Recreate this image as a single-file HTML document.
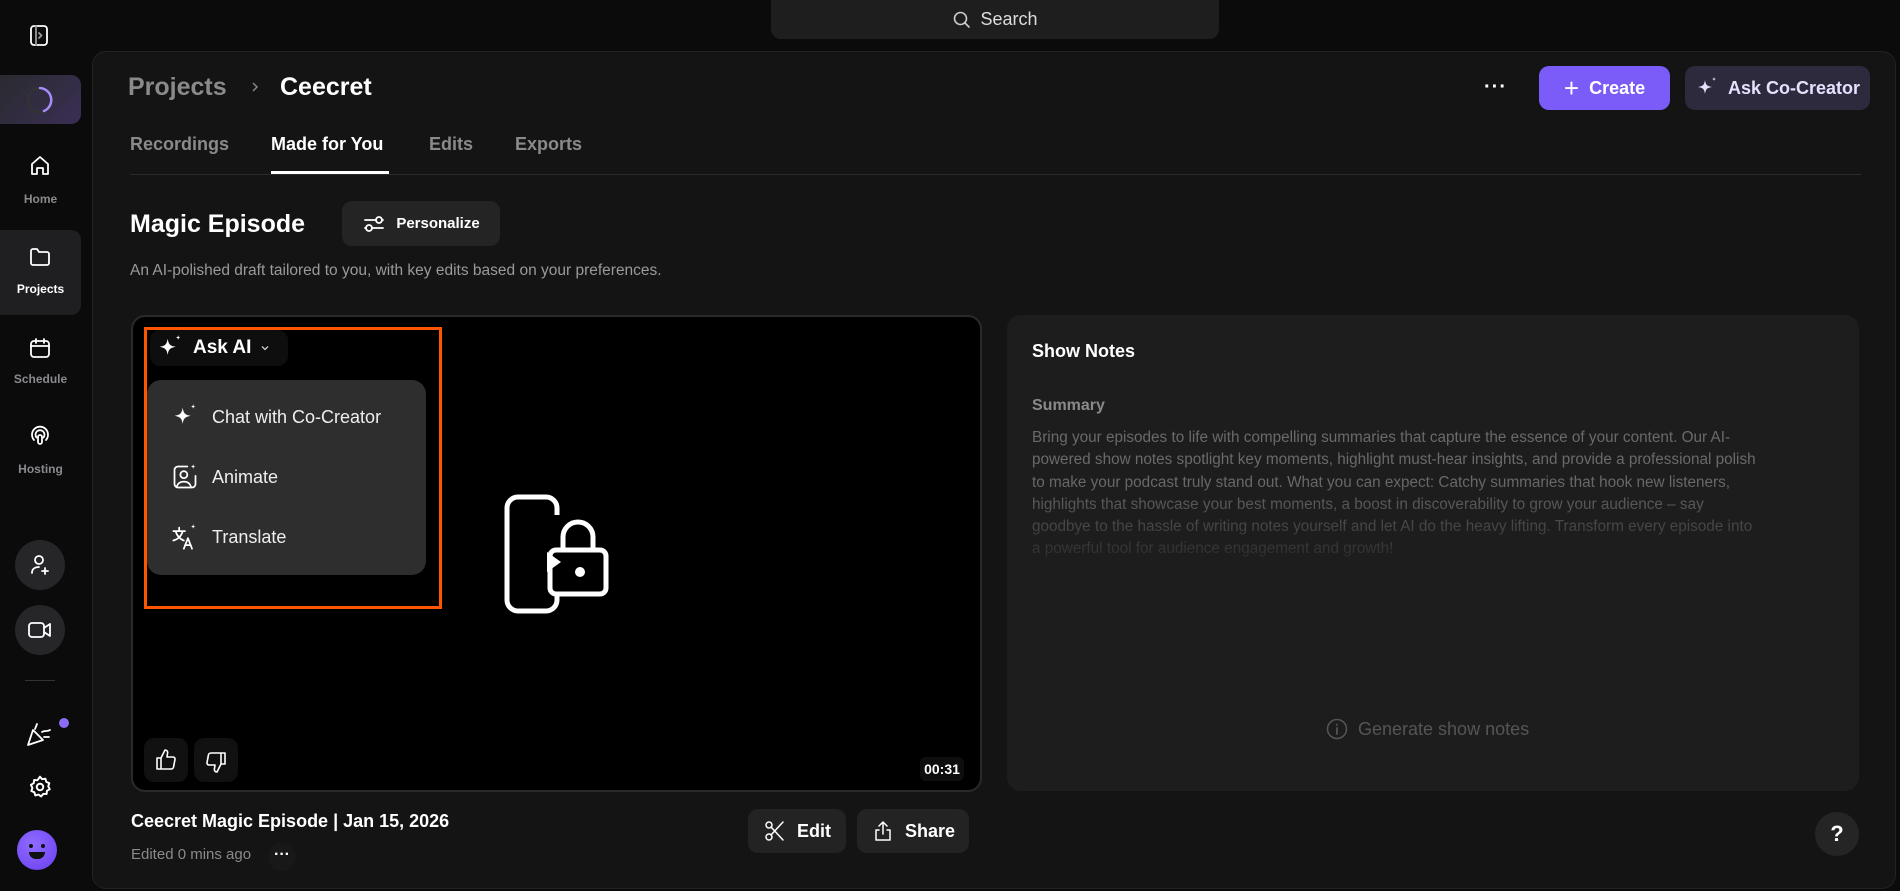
<!DOCTYPE html>
<html><head><meta charset="utf-8"><style>
*{margin:0;padding:0;box-sizing:border-box}
body{width:1900px;height:891px;background:#0b0b0c;font-family:"Liberation Sans",sans-serif;color:#fff;position:relative;overflow:hidden}
.a{position:absolute}
svg{display:block}
.lbl{position:absolute;left:0;width:81px;text-align:center;font-size:12px;font-weight:bold;color:#8a8a8e}
.ic{stroke:#fff;fill:none;stroke-width:1.8;stroke-linecap:round;stroke-linejoin:round}
.btn{position:absolute;border-radius:10px;display:flex;align-items:center;justify-content:center;font-weight:bold}
.mi{position:absolute;left:171px;display:flex;align-items:center;font-size:18px;color:#eee}
.mi svg{margin-right:13px}
</style></head><body>
<!-- search -->
<div class="a" style="left:771px;top:0;width:448px;height:39px;background:#1e1e1f;border-radius:0 0 10px 10px;display:flex;align-items:center;justify-content:center;font-size:18px;color:#ddd">
<svg width="20" height="20" viewBox="0 0 20 20" style="margin-right:8px"><circle cx="8.5" cy="8.5" r="6" stroke="#ccc" stroke-width="1.6" fill="none"/><path d="M13 13l4 4" stroke="#ccc" stroke-width="1.6" stroke-linecap="round"/></svg>Search</div>
<!-- sidebar -->
<svg class="a" style="left:28px;top:23px" width="24" height="24" viewBox="0 0 24 24"><rect x="3" y="3" width="16" height="19" rx="3" class="ic" stroke="#999"/><path d="M8 3v19M11 10l2.5 2.5L11 15" class="ic" style="stroke:#999"/></svg>
<div class="a" style="left:0;top:75px;width:81px;height:49px;border-radius:0 10px 10px 0;background:linear-gradient(135deg,#2a2a2e,#3a2f55)"></div>
<svg class="a" style="left:25px;top:85px" width="30" height="30" viewBox="0 0 30 30"><circle cx="15" cy="15" r="12" stroke="#333" stroke-width="2.5" fill="none"/><path d="M15 3a12 12 0 0 1 4 23" stroke="#a78bfa" stroke-width="2.5" fill="none" stroke-linecap="round"/></svg>
<svg class="a" style="left:28px;top:154px" width="24" height="24" viewBox="0 0 24 24"><path d="M4 10l8-7 8 7v10h-5v-6h-6v6H4z" class="ic"/></svg>
<div class="lbl" style="top:192px">Home</div>
<div class="a" style="left:0;top:230px;width:81px;height:85px;border-radius:0 10px 10px 0;background:#1f1f21"></div>
<svg class="a" style="left:28px;top:245px" width="24" height="24" viewBox="0 0 24 24"><path d="M3 6a2 2 0 0 1 2-2h4l2 3h8a2 2 0 0 1 2 2v9a2 2 0 0 1-2 2H5a2 2 0 0 1-2-2z" class="ic"/></svg>
<div class="lbl" style="top:282px;color:#fff">Projects</div>
<svg class="a" style="left:28px;top:336px" width="24" height="24" viewBox="0 0 24 24"><rect x="3" y="5" width="18" height="16" rx="3" class="ic"/><path d="M3 10h18M8 3v4M16 3v4" class="ic"/></svg>
<div class="lbl" style="top:372px">Schedule</div>
<svg class="a" style="left:28px;top:424px" width="24" height="24" viewBox="0 0 24 24"><path d="M6 16a8 8 0 1 1 12 0M8.5 13.5a4.5 4.5 0 1 1 7 0" class="ic"/><rect x="10" y="11" width="4" height="9" rx="2" class="ic"/></svg>
<div class="lbl" style="top:462px">Hosting</div>
<div class="a" style="left:15px;top:540px;width:50px;height:50px;border-radius:25px;background:#262628"></div>
<svg class="a" style="left:28px;top:553px" width="24" height="24" viewBox="0 0 24 24"><circle cx="11" cy="7" r="4" class="ic"/><path d="M4 20c0-4 3-6 7-6M17 15v6M14 18h6" class="ic"/></svg>
<div class="a" style="left:15px;top:605px;width:50px;height:50px;border-radius:25px;background:#262628"></div>
<svg class="a" style="left:27px;top:618px" width="26" height="24" viewBox="0 0 26 24"><rect x="2" y="5" width="15" height="14" rx="3" class="ic"/><path d="M17 10l6-4v12l-6-4" class="ic"/></svg>
<div class="a" style="left:25px;top:680px;width:30px;height:1px;background:#333"></div>
<svg class="a" style="left:25px;top:720px" width="30" height="28" viewBox="0 0 30 28"><path d="M3 25l5-15 10 10z M10 9l2-5M17 12c3-2 5 0 8-2M19 17h5" class="ic"/></svg>
<div class="a" style="left:59px;top:718px;width:10px;height:10px;border-radius:5px;background:#8b6cf6"></div>
<svg class="a" style="left:27px;top:774px" width="26" height="26" viewBox="0 0 24 24"><path d="M12 2.5l2 2.3 3-.4.8 2.9 2.8 1.2-1 2.9 1.4 2.6-2.6 1.5-.3 3-3-.2L13 20.7 10.6 19l-2.9.8-.9-2.9-2.8-1.2 1-2.8L3.6 10l2.6-1.5.4-3 3 .3z" class="ic"/><circle cx="12" cy="12" r="3" class="ic"/></svg>
<div class="a" style="left:17px;top:830px;width:40px;height:40px;border-radius:20px;background:radial-gradient(circle at 40% 35%,#8f6cff,#6a3df2)"></div>
<div class="a" style="left:29px;top:844px;width:4px;height:4px;border-radius:2px;background:#111"></div>
<div class="a" style="left:41px;top:844px;width:4px;height:4px;border-radius:2px;background:#111"></div>
<div class="a" style="left:29px;top:852px;width:16px;height:7px;border-radius:0 0 8px 8px;background:#111"></div>
<!-- main -->
<div class="a" style="left:92px;top:51px;width:1804px;height:838px;background:#141414;border:1px solid #222;border-radius:14px"></div>
<div class="a" style="left:128px;top:73px;font-size:25px;font-weight:bold;color:#8a8a8a">Projects</div>
<svg class="a" style="left:248px;top:80px" width="14" height="14" viewBox="0 0 14 14"><path d="M5 3l4 4-4 4" stroke="#888" stroke-width="1.5" fill="none"/></svg>
<div class="a" style="left:280px;top:73px;font-size:25px;font-weight:bold">Ceecret</div>
<div class="a" style="left:1484px;top:76px;font-size:20px;font-weight:bold;letter-spacing:1px">···</div>
<div class="btn" style="left:1539px;top:66px;width:131px;height:44px;background:#7b5cf9;font-size:18px"><span style="font-size:26px;font-weight:normal;margin-right:10px;line-height:1">+</span>Create</div>
<div class="btn" style="left:1685px;top:66px;width:185px;height:44px;background:#2e2a3e;font-size:18px;color:#e6e0ff"><svg width="24" height="24" viewBox="0 0 24 24" style="margin-right:9px"><path d="M10 4c.8 5 2 6.2 7 7-5 .8-6.2 2-7 7-.8-5-2-6.2-7-7 5-.8 6.2-2 7-7zM19 1c.3 1.5.6 1.8 2 2-1.4.3-1.7.6-2 2-.3-1.4-.6-1.7-2-2 1.4-.2 1.7-.5 2-2z" fill="#e6e0ff"/></svg>Ask Co-Creator</div>
<div class="a" style="left:130px;top:134px;font-size:18px;color:#8a8a8a;font-weight:bold">Recordings</div>
<div class="a" style="left:271px;top:134px;font-size:18px;color:#fff;font-weight:bold">Made for You</div>
<div class="a" style="left:429px;top:134px;font-size:18px;color:#8a8a8a;font-weight:bold">Edits</div>
<div class="a" style="left:515px;top:134px;font-size:18px;color:#8a8a8a;font-weight:bold">Exports</div>
<div class="a" style="left:130px;top:174px;width:1731px;height:1px;background:#2a2a2a"></div>
<div class="a" style="left:271px;top:171px;width:118px;height:3px;background:#fff"></div>
<div class="a" style="left:130px;top:210px;font-size:25px;font-weight:bold">Magic Episode</div>
<div class="btn" style="left:342px;top:201px;width:158px;height:45px;background:#242424;font-size:15px"><svg width="24" height="22" viewBox="0 0 24 22" style="margin-right:10px"><path d="M3 7h11M20 7h1M3 15h1M10 15h11" class="ic"/><circle cx="17" cy="7" r="3" class="ic"/><circle cx="7" cy="15" r="3" class="ic"/></svg>Personalize</div>
<div class="a" style="left:130px;top:262px;font-size:15.5px;color:#9a9a9a">An AI-polished draft tailored to you, with key edits based on your preferences.</div>
<!-- video -->
<div class="a" style="left:131px;top:315px;width:851px;height:477px;background:#000;border:2px solid #2a2a2a;border-radius:14px"></div>
<div class="a" style="left:150px;top:330px;width:138px;height:36px;background:#0e0e0e;border-radius:10px"></div>
<svg class="a" style="left:156px;top:334px" width="28" height="28" viewBox="0 0 24 24"><path d="M10 4c.8 5 2 6.2 7 7-5 .8-6.2 2-7 7-.8-5-2-6.2-7-7 5-.8 6.2-2 7-7zM19 1c.3 1.5.6 1.8 2 2-1.4.3-1.7.6-2 2-.3-1.4-.6-1.7-2-2 1.4-.2 1.7-.5 2-2z" fill="#fff"/></svg>
<div class="a" style="left:193px;top:337px;font-size:19px;font-weight:bold">Ask AI</div>
<svg class="a" style="left:259px;top:342px" width="12" height="12" viewBox="0 0 12 12"><path d="M3 4.5l3 3 3-3" stroke="#ccc" stroke-width="1.3" fill="none"/></svg>
<div class="a" style="left:147px;top:380px;width:279px;height:195px;background:#2e2e2e;border-radius:14px"></div>
<div class="mi" style="top:403px"><svg width="28" height="28" viewBox="0 0 24 24"><path d="M10 4c.8 5 2 6.2 7 7-5 .8-6.2 2-7 7-.8-5-2-6.2-7-7 5-.8 6.2-2 7-7zM19 1c.3 1.5.6 1.8 2 2-1.4.3-1.7.6-2 2-.3-1.4-.6-1.7-2-2 1.4-.2 1.7-.5 2-2z" fill="#fff"/></svg>Chat with Co-Creator</div>
<div class="mi" style="top:463px"><svg width="28" height="28" viewBox="0 0 24 24"><path d="M14 3H6a3 3 0 0 0-3 3v12a3 3 0 0 0 3 3h12a3 3 0 0 0 3-3v-7" class="ic" style="stroke-width:1.5"/><circle cx="11" cy="10" r="3" class="ic" style="stroke-width:1.5"/><path d="M5 20c1-3 3-4 6-4s5 1 6 4" class="ic" style="stroke-width:1.5"/><path d="M19 1c.3 1.5.6 1.8 2 2-1.4.3-1.7.6-2 2-.3-1.4-.6-1.7-2-2 1.4-.2 1.7-.5 2-2z" fill="#fff"/></svg>Animate</div>
<div class="mi" style="top:523px"><svg width="28" height="28" viewBox="0 0 24 24"><path d="M2 7h10M7 4v3M4 7c1 4 4 7 7 8M10 7c-1 4-4 7-8 8M11 22l3.5-9 3.5 9M12 19h5" class="ic" style="stroke-width:1.5"/><path d="M19 1c.3 1.5.6 1.8 2 2-1.4.3-1.7.6-2 2-.3-1.4-.6-1.7-2-2 1.4-.2 1.7-.5 2-2z" fill="#fff"/></svg>Translate</div>
<div class="a" style="left:144px;top:327px;width:298px;height:282px;border:3px solid #ff5500"></div>
<svg class="a" style="left:500px;top:490px" width="114" height="130" viewBox="0 0 114 130"><path d="M57 25V18a11 11 0 0 0-11-11H18A11 11 0 0 0 7 18v92a11 11 0 0 0 11 11h28a11 11 0 0 0 11-11v-6" stroke="#fff" stroke-width="5" fill="none"/><rect x="50" y="60" width="56" height="44" rx="6" stroke="#fff" stroke-width="5" fill="none"/><path d="M63 60V47a15 15 0 0 1 30 0v13" stroke="#fff" stroke-width="5" fill="none"/><path d="M47 62l14 10-14 10z" fill="#fff"/><circle cx="80" cy="82" r="5" fill="#fff"/></svg>
<div class="a" style="left:144px;top:738px;width:44px;height:44px;background:#111;border-radius:10px"></div>
<svg class="a" style="left:154px;top:748px" width="24" height="24" viewBox="0 0 24 24"><path d="M7 10v11H3V10zM7 10l4-8c2 0 3 1.5 2.5 3.5L13 9h6a2 2 0 0 1 2 2.3l-1.4 7.5A2.5 2.5 0 0 1 17 21H7" class="ic" style="stroke-width:1.6"/></svg>
<div class="a" style="left:194px;top:738px;width:44px;height:44px;background:#111;border-radius:10px"></div>
<svg class="a" style="left:204px;top:750px" width="24" height="24" viewBox="0 0 24 24"><path d="M17 14V3h4v11zM17 14l-4 8c-2 0-3-1.5-2.5-3.5L11 15H5a2 2 0 0 1-2-2.3l1.4-7.5A2.5 2.5 0 0 1 7 3h10" class="ic" style="stroke-width:1.6"/></svg>
<div class="a" style="left:920px;top:757px;width:44px;height:24px;background:#0e0e0e;border-radius:6px;font-size:14px;font-weight:bold;text-align:center;line-height:24px">00:31</div>
<div class="a" style="left:131px;top:811px;font-size:18px;font-weight:bold">Ceecret Magic Episode | Jan 15, 2026</div>
<div class="a" style="left:131px;top:846px;font-size:15px;color:#8a8a8a">Edited 0 mins ago</div>
<div class="a" style="left:268px;top:843px;width:28px;height:28px;border-radius:14px;background:#181818;text-align:center;font-weight:bold;font-size:16px;line-height:24px">···</div>
<div class="btn" style="left:748px;top:809px;width:98px;height:44px;background:#232323;font-size:18px"><svg width="24" height="24" viewBox="0 0 24 24" style="margin-right:10px"><circle cx="6" cy="6" r="3" class="ic" style="stroke-width:1.5"/><circle cx="6" cy="18" r="3" class="ic" style="stroke-width:1.5"/><path d="M8 8l12 13M8 16L20 3" class="ic" style="stroke-width:1.5"/></svg>Edit</div>
<div class="btn" style="left:857px;top:809px;width:112px;height:44px;background:#232323;font-size:18px"><svg width="24" height="24" viewBox="0 0 24 24" style="margin-right:10px"><path d="M12 15V3M8 7l4-4 4 4M8 11H5v10h14V11h-3" class="ic" style="stroke-width:1.5"/></svg>Share</div>
<!-- show notes -->
<div class="a" style="left:1007px;top:315px;width:852px;height:476px;background:#1d1d1d;border-radius:14px"></div>
<div class="a" style="left:1032px;top:341px;font-size:18px;font-weight:bold">Show Notes</div>
<div class="a" style="left:1032px;top:397px;font-size:16px;font-weight:bold;color:#8a8a8a">Summary</div>
<div class="a" style="left:1032px;top:427px;width:820px;height:132px;overflow:hidden;white-space:nowrap;font-size:15.3px;line-height:22.3px;color:#6a6a6a;-webkit-mask-image:linear-gradient(#000 40%,rgba(0,0,0,.2));mask-image:linear-gradient(#000 40%,rgba(0,0,0,.2))">Bring your episodes to life with compelling summaries that capture the essence of your content. Our AI-<br>powered show notes spotlight key moments, highlight must-hear insights, and provide a professional polish<br>to make your podcast truly stand out. What you can expect: Catchy summaries that hook new listeners,<br>highlights that showcase your best moments, a boost in discoverability to grow your audience – say<br>goodbye to the hassle of writing notes yourself and let AI do the heavy lifting. Transform every episode into<br>a powerful tool for audience engagement and growth!</div>
<div class="a" style="left:1326px;top:718px;display:flex;align-items:center;font-size:18px;color:#555"><svg width="22" height="22" viewBox="0 0 22 22" style="margin-right:10px"><circle cx="11" cy="11" r="9.5" stroke="#555" stroke-width="1.5" fill="none"/><path d="M11 10v6M11 6.5v.5" stroke="#555" stroke-width="1.8" stroke-linecap="round"/></svg>Generate show notes</div>
<div class="a" style="left:1815px;top:812px;width:44px;height:44px;border-radius:22px;background:#252525;text-align:center;line-height:44px;font-size:22px;font-weight:bold">?</div>
</body></html>
